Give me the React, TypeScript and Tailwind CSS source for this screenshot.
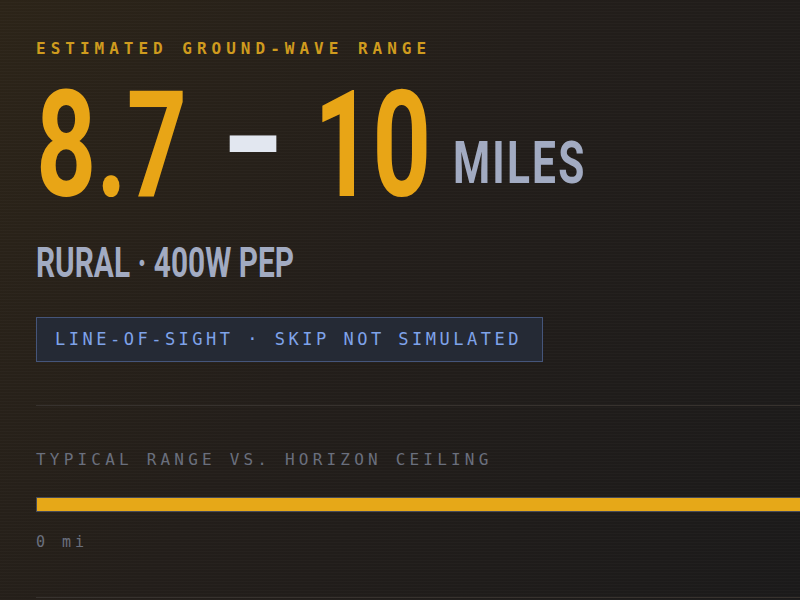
import React from "react";

const mono = "font-['DejaVu_Sans_Mono','Liberation_Mono',monospace]";
const display = "font-['Roboto','Liberation_Sans',sans-serif] font-bold";

const RangeCard = () => {
  return (
    <div className="relative min-h-screen w-full overflow-hidden bg-[linear-gradient(125deg,#2c2418_0%,#231e1a_45%,#1b1a1a_100%)]">
      {/* scanlines */}
      <div className="pointer-events-none absolute inset-0 bg-[repeating-linear-gradient(0deg,rgba(255,255,255,0.018)_0px,rgba(255,255,255,0.018)_1px,transparent_1px,transparent_3px)]" />

      <div className="relative flex flex-col pl-9">
        {/* header label */}
        <div
          className={`${mono} mt-[41px] text-[16px] font-bold leading-[16px] tracking-[5px] text-[#cf9b1e]`}
        >
          ESTIMATED GROUND-WAVE RANGE
        </div>

        {/* big range */}
        <div className={`${display} mt-[15px] flex items-end`}>
          <span className="inline-block w-[187px] shrink-0">
            <span className="inline-block origin-left scale-x-[0.71] text-[148px] leading-[148px] text-[#e8a516]">
              8.7
            </span>
          </span>
          <span className="inline-block w-[91px] shrink-0">
            <span className="inline-block origin-left scale-x-[0.62] text-[148px] leading-[148px] text-[#e2e7f0]">
              –
            </span>
          </span>
          <span className="inline-block w-[139px] shrink-0">
            <span className="inline-block origin-left scale-x-[0.69] text-[148px] leading-[148px] text-[#e8a516]">
              10
            </span>
          </span>
          <span className="mb-[28px] inline-block shrink-0">
            <span className="inline-block origin-left scale-x-[0.72] text-[59px] leading-[59px] tracking-[3px] text-[#a2abc2]">
              MILES
            </span>
          </span>
        </div>

        {/* subtitle */}
        <div className={`${display} mt-[22px]`}>
          <span className="inline-block origin-left scale-x-[0.71] whitespace-nowrap text-[42px] leading-[42px] text-[#a2abc2]">
            RURAL · 400W PEP
          </span>
        </div>

        {/* badge */}
        <div className="mt-[33px] flex">
          <div
            className={`${mono} border border-[#45557a] bg-[#252a35] py-[13px] pl-[18px] pr-[20px] text-[17px] leading-[17px] tracking-[3.5px] text-[#7fa3ea]`}
          >
            LINE-OF-SIGHT · SKIP NOT SIMULATED
          </div>
        </div>

        <div className="mt-[43px] h-px w-full bg-[#37322e]" />

        {/* range bar */}
        <div
          className={`${mono} mt-[46px] text-[16px] leading-[16px] tracking-[4.2px] text-[#6a6f7d]`}
        >
          TYPICAL RANGE VS. HORIZON CEILING
        </div>

        <div className="mt-[29px] h-[15px] w-full border border-r-0 border-[#474b58] bg-[#1c1b1d]">
          <div className="h-full w-full bg-[#e6a818]" />
        </div>

        <div
          className={`${mono} mt-[23px] text-[15px] leading-[15px] tracking-[4px] text-[#6a6f7d]`}
        >
          0 mi
        </div>

        <div className="mt-[47px] h-px w-full bg-[#37322e]" />
      </div>
    </div>
  );
};

export default function App() {
  return <RangeCard />;
}
